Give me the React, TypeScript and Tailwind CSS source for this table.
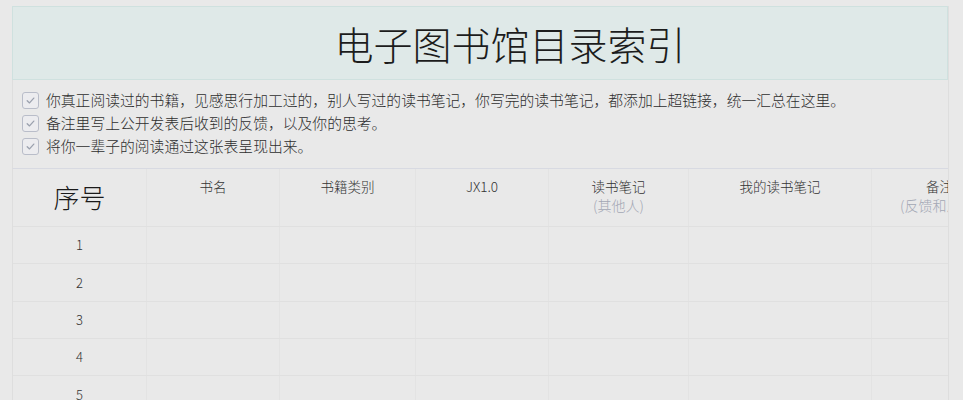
import React from "react";

const cols = [134, 133, 136, 133, 140, 183, 136];

function Check() {
  return (
    <span className="inline-flex items-center justify-center w-[17px] h-[17px] rounded-[3px] border border-[#b9bdc9] bg-[#ececef] shrink-0">
      <svg width="11" height="11" viewBox="0 0 10 10" fill="none">
        <path d="M2 5.2 L4.1 7.2 L8 2.8" stroke="#9ba1ae" strokeWidth="1.2" strokeLinecap="round" strokeLinejoin="round" />
      </svg>
    </span>
  );
}

const items = [
  "你真正阅读过的书籍，见感思行加工过的，别人写过的读书笔记，你写完的读书笔记，都添加上超链接，统一汇总在这里。",
  "备注里写上公开发表后收到的反馈，以及你的思考。",
  "将你一辈子的阅读通过这张表呈现出来。",
];

const headers: { t: string; s?: string }[] = [
  { t: "书名" },
  { t: "书籍类别" },
  { t: "JX1.0" },
  { t: "读书笔记", s: "(其他人)" },
  { t: "我的读书笔记" },
  { t: "备注", s: "(反馈和思考)" },
];

export default function App() {
  const font = { fontFamily: '"Noto Sans CJK SC", "Noto Sans", sans-serif' };
  return (
    <div className="w-[963px] h-[400px] bg-[#e9e9e9] overflow-hidden pt-[6px] pl-[12px]" style={font}>
      <div className="w-[937px] h-[394px] overflow-hidden border-r border-[#dedede]">
        <div className="h-[74px] bg-[#dfe9e8] border border-[#cfe1df] flex items-center justify-center pl-[60px] text-[39px] font-light text-[#1c1c1c] leading-none">
          电子图书馆目录索引
        </div>
        <div className="h-[88px] border-l border-[#dedede] pl-[9px] pt-[9px] flex flex-col">
          {items.map((t, i) => (
            <div key={i} className="flex items-center gap-[7px] h-[23px] text-[14.8px] font-light text-[#2e2e2e] whitespace-nowrap">
              <Check />
              <span>{t}</span>
            </div>
          ))}
        </div>
        <div className="border-t border-[#d8dae2] border-l border-l-[#dedede] overflow-hidden">
          <div className="w-[995px]">
            <div className="flex h-[58px] border-b border-[#e0e0e0]">
              <div className="w-[134px] shrink-0 flex items-center justify-center text-[26px] font-light text-[#1a1a1a] border-r border-[#e3e3e3] pb-[2px]">
                序号
              </div>
              {headers.map((h, i) => (
                <div
                  key={i}
                  className="shrink-0 flex flex-col items-center pt-[8px] text-[13.5px] leading-[19px] font-light text-[#333333] border-r border-[#e3e3e3]"
                  style={{ width: cols[i + 1] }}
                >
                  <span>{h.t}</span>
                  {h.s && <span className="text-[14px] text-[#a3a7b4]">{h.s}</span>}
                </div>
              ))}
            </div>
            {[1, 2, 3, 4, 5, 6].map((n) => (
              <div key={n} className="flex h-[37.3px] border-b border-[#e0e0e0]">
                {cols.map((w, i) => (
                  <div
                    key={i}
                    className="shrink-0 flex items-center justify-center text-[13px] font-light text-[#333333] border-r border-[#e3e3e3]"
                    style={{ width: w }}
                  >
                    {i === 0 ? n : ""}
                  </div>
                ))}
              </div>
            ))}
          </div>
        </div>
      </div>
    </div>
  );
}
